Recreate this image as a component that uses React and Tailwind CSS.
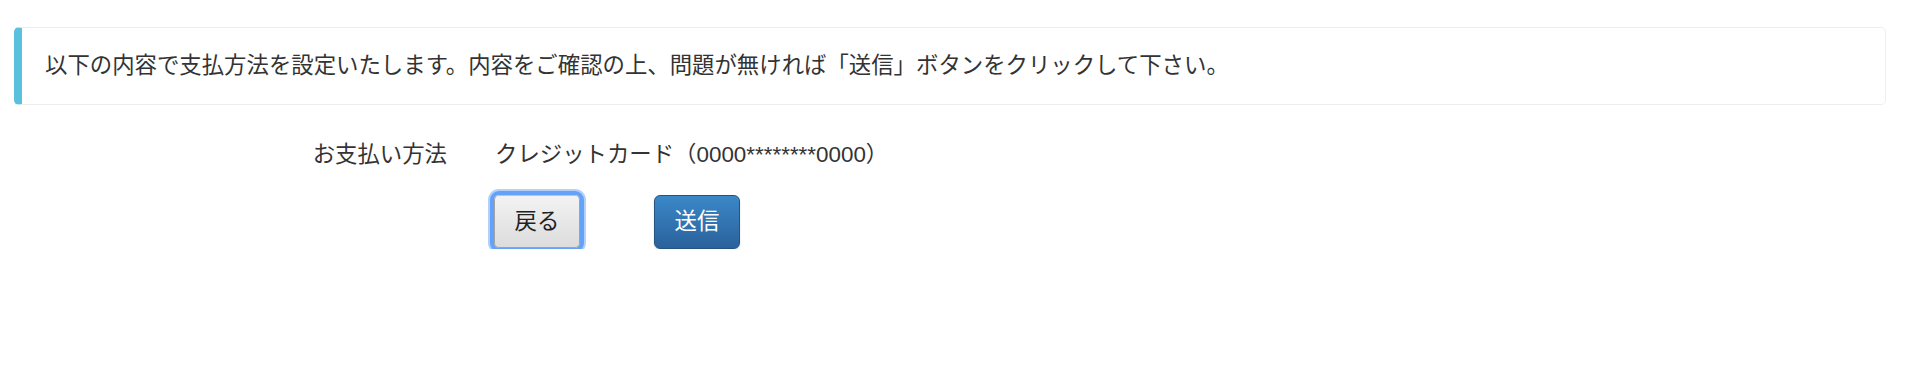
export default function App() {
  return (
    <div className="bg-white text-[#333] text-[22.4px] leading-[30px] font-['Liberation_Sans','Noto_Sans_CJK_JP',sans-serif]">
      {/* info callout */}
      <div className="ml-[14px] mr-[28px] mt-[27px] h-[78px] flex items-center border border-[#eee] border-l-[8px] border-l-[#5bc0de] rounded-[5px] pl-[23px]">
        <p>以下の内容で支払方法を設定いたします。内容をご確認の上、問題が無ければ「送信」ボタンをクリックして下さい。</p>
      </div>

      <div className="mt-[35px] flex">
        <div className="w-[447px] text-right">お支払い方法</div>
        <div className="ml-[48px]">クレジットカード（0000********0000）</div>
      </div>

      <div className="mt-[25px] flex pl-[494px] gap-[74px]">
        <button
          type="button"
          className="w-[86px] h-[53px] rounded-[5px] border border-[#a3a3a3] border-t-[#c4c4c4] bg-gradient-to-b from-[#f3f3f3] to-[#dcdcdc] text-[#222] shadow-[0_0_0_4px_#64a2f9,0_0_0_6px_#b3d0fb]"
        >
          戻る
        </button>
        <button
          type="button"
          className="w-[86px] h-[54px] rounded-[6px] border border-[#245580] bg-gradient-to-b from-[#3b88c8] to-[#2a629c] text-white shadow-[0_1px_2px_rgba(0,0,0,0.15)]"
        >
          送信
        </button>
      </div>
    </div>
  );
}
